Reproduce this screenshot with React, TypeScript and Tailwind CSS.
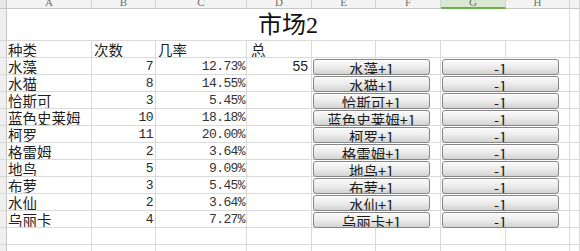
import React from "react";

const GRID = "grid grid-cols-[7px_85px_64px_91px_65px_64px_65px_65px_64px_1fr]";

const COL = [
    "col-start-1",
    "col-start-2",
    "col-start-3",
    "col-start-4",
    "col-start-5",
    "col-start-6",
    "col-start-7",
    "col-start-8",
    "col-start-9",
    "col-start-10",
];

const LETTERS = ["A", "B", "C", "D", "E", "F", "G", "H", ""];

const ROWS: [string, number, string][] = [
    ["水藻", 7, "12.73%"],
    ["水猫", 8, "14.55%"],
    ["恰斯可", 3, "5.45%"],
    ["蓝色史莱姆", 10, "18.18%"],
    ["柯罗", 11, "20.00%"],
    ["格雷姆", 2, "3.64%"],
    ["地鸟", 5, "9.09%"],
    ["布萝", 3, "5.45%"],
    ["水仙", 2, "3.64%"],
    ["乌丽卡", 4, "7.27%"],
];

const cjk = "font-['Noto_Sans_CJK_SC',sans-serif]";
const mono = "font-['Liberation_Mono','Noto_Sans_CJK_SC',monospace]";

function Cell({ col, className = "", children }: { col: number; className?: string; children?: React.ReactNode }) {
    return (
        <div
            className={`${COL[col]} row-start-1 flex items-end overflow-hidden whitespace-nowrap border-r border-b border-[#dadada] ${className}`}
        >
            {children}
        </div>
    );
}

function RowHead() {
    return <div className="col-start-1 row-start-1 bg-[#efefef] border-r border-[#c4c4c4] border-b border-b-[#d6d6d6]" />;
}

function SheetButton({ col, label }: { col: number; label: string }) {
    return (
        <button
            className={`${COL[col]} col-span-2 row-start-1 z-10 mt-[1px] ml-[1px] mr-[11px] h-[16px] rounded-[3px] border border-[#858585] bg-gradient-to-b from-[#fafafa] via-[#ececec] to-[#d3d3d3] shadow-[inset_0_1px_0_#ffffff] overflow-hidden text-center text-[14.5px] leading-[14px] pt-[2px] text-[#1a1a1a] ${cjk}`}
        >
            {label}
        </button>
    );
}

export default function App() {
    return (
        <div className="w-[580px] h-[251px] overflow-hidden bg-white text-[#1e1e1e]">
            {/* column letters */}
            <div className={`${GRID} h-[9px] bg-[#f3f3f3]`}>
                <div className="col-start-1 row-start-1 bg-[#e8e8e8] border-r border-b border-[#c4c4c4]" />
                {LETTERS.map((l, i) => (
                    <div
                        key={i}
                        className={`${COL[i + 1]} row-start-1 overflow-hidden border-r border-[#d4d4d4] text-center font-['Liberation_Serif',serif] text-[11px] leading-[11px] text-[#6e6e6e] ${
                            l === "G" ? "bg-[#d9e9d1] border-b-2 border-b-[#6caf4c]" : "border-b border-b-[#c8c8c8]"
                        }`}
                    >
                        <span className="block -mt-[3px]">{l}</span>
                    </div>
                ))}
            </div>

            {/* title row */}
            <div className={`${GRID} h-[32px]`}>
                <RowHead />
                <div className="col-start-2 col-span-8 row-start-1 flex items-end justify-center border-r border-b border-[#dadada] pb-[1px]">
                    <span className="font-['Liberation_Serif','Noto_Sans_CJK_SC',serif] text-[24px] leading-[28px] text-[#111]">市场2</span>
                </div>
                <Cell col={9} />
            </div>

            {/* header row */}
            <div className={`${GRID} h-[17px] text-[14.5px] leading-[15px] ${cjk}`}>
                <RowHead />
                <Cell col={1} className="pl-[1px]">种类</Cell>
                <Cell col={2} className="pl-[2px]">次数</Cell>
                <Cell col={3} className="pl-[2px]">几率</Cell>
                <Cell col={4} className="pl-[4px]">总</Cell>
                <Cell col={5} />
                <Cell col={6} />
                <Cell col={7} />
                <Cell col={8} />
                <Cell col={9} />
            </div>

            {ROWS.map(([name, count, pct], r) => (
                <div key={name} className={`${GRID} h-[17px] text-[14.5px] leading-[15px] ${cjk}`}>
                    <RowHead />
                    <Cell col={1} className="pl-[1px]">{name}</Cell>
                    <Cell col={2} className={`justify-end pr-[2px] text-[13px] tracking-[-0.6px] text-[#2a2a2a] ${mono}`}>{count}</Cell>
                    <Cell col={3} className={`justify-end pr-[1px] text-[13px] tracking-[-0.6px] text-[#333] ${mono}`}>{pct}</Cell>
                    <Cell col={4} className="justify-end pr-[3px] font-['Liberation_Sans',sans-serif] text-[14px]">
                        {r === 0 ? "55" : ""}
                    </Cell>
                    <Cell col={5} />
                    <Cell col={6} />
                    <Cell col={7} />
                    <Cell col={8} />
                    <Cell col={9} />
                    <SheetButton col={5} label={`${name}+1`} />
                    <SheetButton col={7} label="-1" />
                </div>
            ))}

            {[0, 1].map((k) => (
                <div key={k} className={`${GRID} h-[17px]`}>
                    <RowHead />
                    <Cell col={1} />
                    <Cell col={2} />
                    <Cell col={3} />
                    <Cell col={4} />
                    <Cell col={5} />
                    <Cell col={6} />
                    <Cell col={7} />
                    <Cell col={8} />
                    <Cell col={9} />
                </div>
            ))}
        </div>
    );
}
